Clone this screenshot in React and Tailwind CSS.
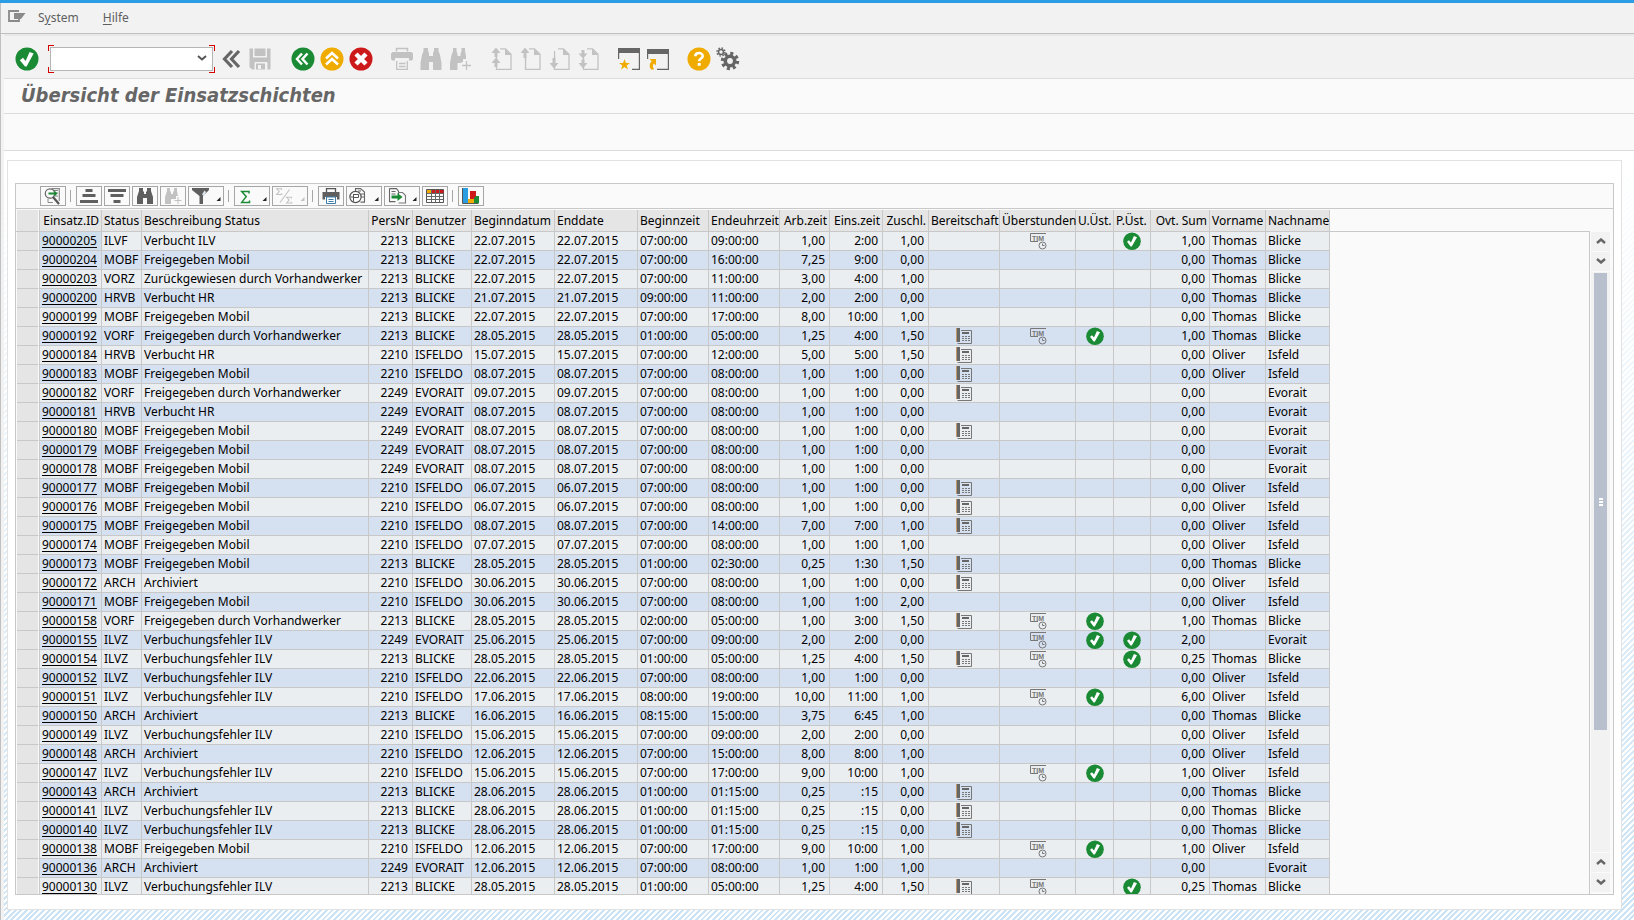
import React from "react";

const GREEN = "#1a8a34";
const AMBER = "#f0ab00";
const RED = "#cc1919";
const DARK = "#666666";
const LIGHT = "#c2c2c2";

/* ---------- main toolbar icons (24 x 24) ---------- */

function Svg({ w = 24, h = 24, children }) {
  return (
    <svg width={w} height={h} viewBox={`0 0 ${w} ${h}`} fill="none" className="block" aria-hidden="true">
      {children}
    </svg>
  );
}

const CheckIcon = () => (
  <Svg>
    <circle cx="12" cy="12" r="11.5" fill={GREEN} />
    <path d="M4.8 13.2 8 10.8l2.6 3.2L14.6 5l4 1.6L11.6 19.4H10z" fill="#fff" />
  </Svg>
);

const DoubleLeft = () => (
  <Svg>
    <path d="M13 4 5.5 12l7.5 8M20 4l-7.5 8 7.5 8" stroke={DARK} strokeWidth="3.2" />
  </Svg>
);

const SaveIcon = () => (
  <Svg>
    <path
      fillRule="evenodd"
      fill={LIGHT}
      d="M1.500 1.500h3.500V10.500h14V1.500h3.500v21h-3v-6.500a1 1 0 0 0-1-1h-11a1 1 0 0 0-1 1v6.500H4l-2.500-2.500zM6.500 1.500h11V9H6.500zM8 16.500h9v6H8zM10 18v4h3v-4z"
    />
  </Svg>
);

const BackIcon = () => (
  <Svg>
    <circle cx="12" cy="12" r="11.5" fill={GREEN} />
    <path d="M11 6.500 6 12l5 5.500M16.500 6.500l-5 5.500 5 5.500" stroke="#fff" strokeWidth="2.500" />
  </Svg>
);

const UpIcon = () => (
  <Svg>
    <circle cx="12" cy="12" r="11.5" fill={AMBER} />
    <path d="M6 11.500 12 6l6 5.500M6 17.500 12 12l6 5.500" stroke="#fff" strokeWidth="2.500" />
  </Svg>
);

const CancelIcon = () => (
  <Svg>
    <circle cx="12" cy="12" r="11.5" fill={RED} />
    <path d="m7 7 10 10M17 7 7 17" stroke="#fff" strokeWidth="4.500" />
  </Svg>
);

const PrintIcon = () => (
  <Svg>
    <path d="M6.500 4.500v-3h11v3" stroke={LIGHT} strokeWidth="1.500" />
    <path d="M1 6.500 2.500 5h19L23 6.500V12l-1 1.500h-3V11H5v2.500H2L1 12z" fill={LIGHT} />
    <path d="M6.700 14v8.300h10.600V14M9 16.500h6.500M9 19.500h6.500" stroke={LIGHT} strokeWidth="1.300" />
  </Svg>
);

const BINOCULARS =
  "M4.500 1H9v3l1 2v3h4V6l1-2V1h4.500v3L21 8l1.500 8v7H14v-8h-4v8H1.500v-7L3 8l1.500-4z";

const FindIcon = () => (
  <Svg>
    <path d={BINOCULARS} fill={LIGHT} />
  </Svg>
);

const FindNextIcon = () => (
  <Svg>
    <path d="M5 1h3.500v3l1 3v2h3V7l1-3V1H17v3l1 5v3h-3v3l-3 1h-2.500v7H2v-7l1.500-8L5 4z" fill={LIGHT} />
    <path d="M18.500 14v9M14 18.500h9" stroke={LIGHT} strokeWidth="1.300" />
  </Svg>
);

function PageIcon({ arrows }) {
  return (
    <Svg>
      <path d="M11 1.800h5.500l5.500 5.500V22.300H7.500V20M7.500 10v4" stroke={LIGHT} strokeWidth="1.300" />
      <path d="M16 1.500V8h6.300z" fill={LIGHT} />
      <path d={arrows} fill={LIGHT} />
    </Svg>
  );
}

const FirstPage = () => (
  <PageIcon arrows="M7 .500 11.500 6H8.500v4h-3V6h-3zM7 10.500l4.500 5.500H8.500v4h-3v-4h-3z" />
);
const PrevPage = () => <PageIcon arrows="M7 .500 11.500 6H8.500v5h-3V6h-3zM6.900 10h1.300v11H6.900z" />;
const NextPage = () => <PageIcon arrows="M5.500 11h3v5h3L7 21.500 2.500 16h3zM6.900 4h1.300v8H6.900z" />;
const LastPage = () => (
  <PageIcon arrows="M5.500 3h3v3.500h3L7 11.500 2.500 6.500h3zM5.500 12.500h3V16h3L7 21.500 2.500 16h3z" />
);

const NewSession = () => (
  <Svg>
    <path d="M1 1h22v5H1z" fill={DARK} />
    <path d="M1.600 5v7M22.400 5v17.400H15" stroke={DARK} strokeWidth="1.200" />
    <path d="m7.500 12 1.400 4h4.100l-3.300 2.500 1.300 4-3.500-2.400L4 22.500l1.300-4L2 16h4.100z" fill={AMBER} />
  </Svg>
);

const Shortcut = () => (
  <Svg>
    <path d="M1 2h22v5H1z" fill={DARK} />
    <path d="M1.600 6v6M22.400 6v16.400H11" stroke={DARK} strokeWidth="1.200" />
    <path d="M3.500 12H10v6.500l-2-2c-1 1-1.300 2.500-.800 4L8 22.500H5c-2-3-1.800-6 .700-8.300z" fill={AMBER} />
  </Svg>
);

const HelpIcon = () => (
  <Svg>
    <circle cx="12" cy="12" r="11.5" fill={AMBER} />
    <path d="M8.300 9.200C8.300 5 15.700 5 15.700 9c0 2.700-3.600 2.400-3.600 5.300" stroke="#fff" strokeWidth="2.600" />
    <path d="M10.700 16h3v2.800h-3z" fill="#fff" />
  </Svg>
);

const GearsIcon = () => (
  <Svg>
    <circle cx="14" cy="14" r="4.700" stroke={DARK} strokeWidth="3.600" />
    <circle cx="14" cy="14" r="7.500" stroke={DARK} strokeWidth="3.400" strokeDasharray="3 2.890" />
    <circle cx="5" cy="5" r="2.500" stroke={DARK} strokeWidth="1.500" />
    <circle cx="5" cy="5" r="4" stroke={DARK} strokeWidth="1.500" strokeDasharray="1.500 1.640" />
  </Svg>
);

/* ---------- grid toolbar icons (24 x 18) ---------- */

const DropMark = ({ color = "#222" }) => <path d="M31.500 10v4h-4z" fill={color} />;

const DetailsIcon = () => (
  <Svg h={18}>
    <path d="M10.500 1.600h7.800V14" stroke="#8a8a8a" strokeWidth="1.200" />
    <path d="M14 6h3M14 9h3M12 3.500h5" stroke="#8a8a8a" />
    <circle cx="9" cy="6.500" r="4.700" stroke={DARK} strokeWidth="1.200" />
    <path d="M7 12v3.500h5" stroke="#8a8a8a" />
    <path d="m12 10 6 7" stroke="#555" strokeWidth="2.200" />
    <path d="M7.500 5.500h6V3.500l3 3-3 3V7.500h-6z" fill={GREEN} />
  </Svg>
);
const SortAsc = () => (
  <Svg h={18}>
    <path d="M8.500 2h7v3h-7zM5.500 7h13v3h-13zM3 13h18v3H3z" fill="#5f5f5f" />
  </Svg>
);
const SortDesc = () => (
  <Svg h={18}>
    <path d="M3 2h18v3H3zM5.500 7h13v3h-13zM8.500 13h7v3h-7z" fill="#5f5f5f" />
  </Svg>
);
const GridFind = () => (
  <Svg h={18}>
    <path d="M6 1h4v3l1 1v2h2V5l1-1V1h4v3l2 6v7h-6v-6h-4v6H4v-7l2-6z" fill="#5f5f5f" />
  </Svg>
);
const GridFindNext = () => (
  <Svg h={18}>
    <path d="M6 1h3v3l1 1v2h2V5l1-1V1h3v3l1 5h-2v3h-5v5H4v-7l2-6z" fill={LIGHT} />
    <path d="M17 10v7M13.500 13.500h7" stroke={LIGHT} />
  </Svg>
);
const FilterIcon = () => (
  <Svg w={34} h={18}>
    <path d="M3 1h17v2l-6 6v8h-3.500V9L3 3z" fill="#5f5f5f" />
    <path d="M15.500 3.500 13 7.500l2 1.500 2-4z" fill="#dfeaf2" />
    <DropMark />
  </Svg>
);
const SumIcon = () => (
  <Svg w={34} h={18}>
    <path d="M14 6.500V4.600H6.700l4.500 5-4.500 5.800H14.500v-2" stroke={GREEN} strokeWidth="1.500" />
    <DropMark />
  </Svg>
);
const SubtotalIcon = () => (
  <Svg w={34} h={18}>
    <path d="M8.500 3V1.800H3.700l2.500 2.700-2.500 3H8.700V6.300M18.500 11.500v-1.200h-4.800l2.500 2.700-2.500 3h5v-1.200M16.500 2.500 7 15.500" stroke={LIGHT} strokeWidth="1.100" />
    <DropMark color={LIGHT} />
  </Svg>
);
const GridPrint = () => (
  <Svg h={18}>
    <path d="M7.500 5V1.700h9V5" stroke="#555" strokeWidth="1.300" />
    <path d="M3.500 5h17v7.500H18V10H6v2.500H3.500z" fill="#5f5f5f" />
    <path d="M7.500 10h9v6.500h-9z" fill="#fff" stroke="#3d7dad" />
    <path d="M9.500 12.500h5M9.500 14.500h5" stroke="#3d7dad" />
  </Svg>
);
const ViewsIcon = () => (
  <Svg w={34} h={18}>
    <path d="M8.500 5V1.600h5l4 3.500v10h-4" stroke="#666" strokeWidth="1.100" />
    <path d="M11 4h3M14 7h3M14 10h3" stroke="#666" />
    <circle cx="8.500" cy="10" r="5.600" fill="#fff" stroke="#555" strokeWidth="1.200" />
    <path d="M6.500 7.500h5v3h-5zM6.500 7v7.500M3.500 10h3" stroke="#555" />
    <DropMark />
  </Svg>
);
const ExportIcon = () => (
  <Svg w={34} h={18}>
    <path d="M4.500 1.600h7l2 2.500V7M4.500 1.600v13h6M6.500 4.500h4M6.500 7h4" stroke="#666" strokeWidth="1.100" />
    <path d="M13.500 5.500h4l3 3v7.500h-7" stroke="#777" strokeWidth="1.100" />
    <path d="M6.500 8.500h6V6l5 4-5 4v-2.500h-6z" fill={GREEN} />
    <DropMark />
  </Svg>
);
const LayoutIcon = () => (
  <Svg h={18}>
    <path d="M3.500 2.500h17v13h-17z" fill="#fff" stroke="#555" />
    <path d="M4 3h8.500v3.500H4z" fill={AMBER} />
    <path d="M8.500 3h12v3.500h-12z" fill={RED} />
    <path d="M3.500 6.500h17M3.500 9.500h17M3.500 12.500h17M8.500 2.500v13M12.500 2.500v13M16.500 2.500v13" stroke="#666" />
  </Svg>
);
const ChartIcon = () => (
  <Svg h={18}>
    <path d="M4 1h5v16H4z" fill="#2a9de0" />
    <path d="M11 4h6v8h-6z" fill={RED} />
    <path d="M9 12h6v5H9z" fill={AMBER} />
    <path d="m15 11 2-2h3v7l-1 1h-4z" fill={GREEN} />
    <path d="M3.500 1v15.500H19" stroke="#555" />
  </Svg>
);

/* ---------- cell icons ---------- */

const CellCheck = () => (
  <svg width="18" height="18" viewBox="0 0 18 18" className="mx-auto block" role="img" aria-label="Ja">
    <circle cx="9" cy="9.200" r="8.800" fill={GREEN} />
    <path d="m4 9.800 2-1.500 2 2.300L10.900 4l3.100 1.200L8.800 14.600H7.600z" fill="#fff" />
  </svg>
);
const CellPhone = () => (
  <svg width="18" height="18" viewBox="0 0 18 18" className="mx-auto block" role="img" aria-label="Bereitschaft">
    <path d="M1 1h1v14H1z" fill="#c49a6c" />
    <path d="M2 1h3v14H2z" fill="#666" />
    <path d="M6 3.500h10.500v13H2.500" fill="none" stroke="#777" />
    <path d="M7 5h7v2H7z" fill="#666" />
    <path d="M7 9.500h8M7 11.500h8M7 13.500h8" stroke="#777" strokeDasharray="2 1" />
  </svg>
);
const CellTime = () => (
  <svg width="18" height="18" viewBox="0 0 18 18" className="mx-auto block" role="img" aria-label="Überstunden">
    <path d="M17 1.500H1.500v8H9" fill="none" stroke="#777" />
    <text x="3" y="8.500" fontSize="7" fontWeight="700" fontFamily="Liberation Sans, sans-serif" fill="#777">
      TIM
    </text>
    <circle cx="13.500" cy="13.500" r="3.500" fill="none" stroke="#777" />
    <path d="M13.500 11.500v2h2" fill="none" stroke="#777" />
  </svg>
);

/* ---------- data ---------- */

const COLUMNS = [
  ["Einsatz.ID", "w-[62px]", "r"],
  ["Status", "w-[40px]", "l"],
  ["Beschreibung Status", "w-[227px]", "l"],
  ["PersNr", "w-[44px]", "r"],
  ["Benutzer", "w-[59px]", "l"],
  ["Beginndatum", "w-[83px]", "l"],
  ["Enddate", "w-[83px]", "l"],
  ["Beginnzeit", "w-[71px]", "l"],
  ["Endeuhrzeit", "w-[71px]", "l"],
  ["Arb.zeit", "w-[50px]", "r"],
  ["Eins.zeit", "w-[53px]", "r"],
  ["Zuschl.", "w-[46px]", "r"],
  ["Bereitschaft", "w-[71px]", "l"],
  ["Überstunden", "w-[76px]", "l"],
  ["U.Üst.", "w-[38px]", "l"],
  ["P.Üst.", "w-[37px]", "l"],
  ["Ovt. Sum", "w-[59px]", "r"],
  ["Vorname", "w-[56px]", "l"],
  ["Nachname", "w-[64px]", "l"],
];

const STATUS = {
  ILVF: "Verbucht ILV",
  MOBF: "Freigegeben Mobil",
  VORZ: "Zurückgewiesen durch Vorhandwerker",
  HRVB: "Verbucht HR",
  VORF: "Freigegeben durch Vorhandwerker",
  ARCH: "Archiviert",
  ILVZ: "Verbuchungsfehler ILV",
};

const PEOPLE = {
  B: ["2213", "BLICKE", "Thomas", "Blicke"],
  I: ["2210", "ISFELDO", "Oliver", "Isfeld"],
  E: ["2249", "EVORAIT", "", "Evorait"],
};

// id | status | person | date | start | end | work | shift | surcharge | flags (B, T, U, P) | overtime
const ROWS = `90000205|ILVF|B|22.07.2015|07:00:00|09:00:00|1,00|2:00|1,00|TP|1,00
90000204|MOBF|B|22.07.2015|07:00:00|16:00:00|7,25|9:00|0,00||0,00
90000203|VORZ|B|22.07.2015|07:00:00|11:00:00|3,00|4:00|1,00||0,00
90000200|HRVB|B|21.07.2015|09:00:00|11:00:00|2,00|2:00|0,00||0,00
90000199|MOBF|B|22.07.2015|07:00:00|17:00:00|8,00|10:00|1,00||0,00
90000192|VORF|B|28.05.2015|01:00:00|05:00:00|1,25|4:00|1,50|BTU|1,00
90000184|HRVB|I|15.07.2015|07:00:00|12:00:00|5,00|5:00|1,50|B|0,00
90000183|MOBF|I|08.07.2015|07:00:00|08:00:00|1,00|1:00|0,00|B|0,00
90000182|VORF|E|09.07.2015|07:00:00|08:00:00|1,00|1:00|0,00|B|0,00
90000181|HRVB|E|08.07.2015|07:00:00|08:00:00|1,00|1:00|0,00||0,00
90000180|MOBF|E|08.07.2015|07:00:00|08:00:00|1,00|1:00|0,00|B|0,00
90000179|MOBF|E|08.07.2015|07:00:00|08:00:00|1,00|1:00|0,00||0,00
90000178|MOBF|E|08.07.2015|07:00:00|08:00:00|1,00|1:00|0,00||0,00
90000177|MOBF|I|06.07.2015|07:00:00|08:00:00|1,00|1:00|0,00|B|0,00
90000176|MOBF|I|06.07.2015|07:00:00|08:00:00|1,00|1:00|0,00|B|0,00
90000175|MOBF|I|08.07.2015|07:00:00|14:00:00|7,00|7:00|1,00|B|0,00
90000174|MOBF|I|07.07.2015|07:00:00|08:00:00|1,00|1:00|1,00||0,00
90000173|MOBF|B|28.05.2015|01:00:00|02:30:00|0,25|1:30|1,50|B|0,00
90000172|ARCH|I|30.06.2015|07:00:00|08:00:00|1,00|1:00|0,00|B|0,00
90000171|MOBF|I|30.06.2015|07:00:00|08:00:00|1,00|1:00|2,00||0,00
90000158|VORF|B|28.05.2015|02:00:00|05:00:00|1,00|3:00|1,50|BTU|1,00
90000155|ILVZ|E|25.06.2015|07:00:00|09:00:00|2,00|2:00|0,00|TUP|2,00
90000154|ILVZ|B|28.05.2015|01:00:00|05:00:00|1,25|4:00|1,50|BTP|0,25
90000152|ILVZ|I|22.06.2015|07:00:00|08:00:00|1,00|1:00|0,00||0,00
90000151|ILVZ|I|17.06.2015|08:00:00|19:00:00|10,00|11:00|1,00|TU|6,00
90000150|ARCH|B|16.06.2015|08:15:00|15:00:00|3,75|6:45|1,00||0,00
90000149|ILVZ|I|15.06.2015|07:00:00|09:00:00|2,00|2:00|0,00||0,00
90000148|ARCH|I|12.06.2015|07:00:00|15:00:00|8,00|8:00|1,00||0,00
90000147|ILVZ|I|15.06.2015|07:00:00|17:00:00|9,00|10:00|1,00|TU|1,00
90000143|ARCH|B|28.06.2015|01:00:00|01:15:00|0,25|:15|0,00|B|0,00
90000141|ILVZ|B|28.06.2015|01:00:00|01:15:00|0,25|:15|0,00|B|0,00
90000140|ILVZ|B|28.06.2015|01:00:00|01:15:00|0,25|:15|0,00|B|0,00
90000138|MOBF|I|12.06.2015|07:00:00|17:00:00|9,00|10:00|1,00|TU|1,00
90000136|ARCH|E|12.06.2015|07:00:00|08:00:00|1,00|1:00|1,00||0,00
90000130|ILVZ|B|28.05.2015|01:00:00|05:00:00|1,25|4:00|1,50|BTP|0,25`
  .split("\n")
  .map((line) => line.split("|"));

/* ---------- building blocks ---------- */

function ToolGroup({ items }) {
  return (
    <div className="flex gap-[5px]">
      {items.map(([label, Icon]) => (
        <button key={label} type="button" aria-label={label} className="size-6">
          <Icon />
        </button>
      ))}
    </div>
  );
}

function GridButton({ label, icon: Icon }) {
  return (
    <button type="button" aria-label={label} className="h-5 border border-[#a6a6a6] bg-[#fafafa]">
      <Icon />
    </button>
  );
}

const Separator = () => <div className="mx-[2px] h-3 w-[2px] border-l border-[#a6a6a6]" />;

function ScrollButton({ label, up }) {
  return (
    <button type="button" aria-label={label} className="flex h-[19px] w-full shrink-0 items-center justify-center bg-[#f2f2f2]">
      <svg width="10" height="6" viewBox="0 0 10 6" fill="none" className="mb-px" aria-hidden="true">
        <path d={up ? "M1 5l4-3.500L9 5" : "M1 1l4 3.500L9 1"} stroke={DARK} strokeWidth="2.400" />
      </svg>
    </button>
  );
}

const Corner = ({ className }) => <span className={`pointer-events-none absolute size-[6px] border-[#d40000] ${className}`} />;

function Row({ row, index }) {
  const [id, status, who, date, start, end, work, shift, extra, flags, sum] = row;
  const [pers, user, first, last] = PEOPLE[who];
  const line = "h-[19px] border-r border-b border-[#c8c8c8] p-0";
  const left = `${line} pl-[2px] text-left`;
  const right = `${line} pr-[4px] text-right`;
  return (
    <tr className={index % 2 ? "bg-[#d5e0f1]" : "bg-[#eaeef1]"}>
      <td className="border-r border-b border-r-[#fafafa] border-b-[#c8c8c8] bg-[#e5e5e5] p-0" />
      <td className={`${line} border-l pl-[2px] text-left ${index === 0 ? "bg-[#cfe0ec]" : ""}`}>
        <a href={`#${id}`} className="underline underline-offset-2">{id}</a>
      </td>
      <td className={left}>{status}</td>
      <td className={left}>{STATUS[status]}</td>
      <td className={right}>{pers}</td>
      <td className={left}>{user}</td>
      <td className={left}>{date}</td>
      <td className={left}>{date}</td>
      <td className={left}>{start}</td>
      <td className={left}>{end}</td>
      <td className={right}>{work}</td>
      <td className={right}>{shift}</td>
      <td className={right}>{extra}</td>
      <td className={line}>{flags.includes("B") && <CellPhone />}</td>
      <td className={line}>{flags.includes("T") && <CellTime />}</td>
      <td className={line}>{flags.includes("U") && <CellCheck />}</td>
      <td className={line}>{flags.includes("P") && <CellCheck />}</td>
      <td className={right}>{sum}</td>
      <td className={left}>{first}</td>
      <td className={left}>{last}</td>
    </tr>
  );
}

function Grid() {
  return (
    <section className="flex min-h-0 flex-1 flex-col border border-[#c8c8c8] bg-[#fafafa]">
      <div className="flex h-[25px] shrink-0 items-center gap-[2px] border-b border-[#c8c8c8] pl-6">
        <GridButton label="Details" icon={DetailsIcon} />
        <Separator />
        <GridButton label="Aufsteigend sortieren" icon={SortAsc} />
        <GridButton label="Absteigend sortieren" icon={SortDesc} />
        <GridButton label="Suchen" icon={GridFind} />
        <GridButton label="Weitersuchen" icon={GridFindNext} />
        <GridButton label="Filter" icon={FilterIcon} />
        <Separator />
        <GridButton label="Summe" icon={SumIcon} />
        <GridButton label="Zwischensumme" icon={SubtotalIcon} />
        <Separator />
        <GridButton label="Drucken" icon={GridPrint} />
        <GridButton label="Sichten" icon={ViewsIcon} />
        <GridButton label="Exportieren" icon={ExportIcon} />
        <GridButton label="Layout" icon={LayoutIcon} />
        <Separator />
        <GridButton label="Grafik" icon={ChartIcon} />
      </div>
      <div className="flex min-h-0 flex-1 pt-px">
        <div className="relative min-w-0 flex-1 overflow-hidden pl-px">
          <div className="absolute inset-x-0 top-[21px] bottom-0 border-t border-r border-[#c8c8c8]" />
          <table className="relative w-[1313px] table-fixed border-separate border-spacing-0 text-[12px] leading-[18px] whitespace-nowrap text-black">
            <colgroup>
              <col className="w-[22px]" />
              {COLUMNS.map(([title, width], i) => (
                <col key={title} className={i === 0 ? "w-[63px]" : width} />
              ))}
            </colgroup>
            <thead>
              <tr className="bg-[#e5e5e5]">
                <td className="h-[22px] border-r border-b border-r-[#fafafa] border-b-[#c8c8c8] p-0" />
                {COLUMNS.map(([title, , align], i) => (
                  <th
                    key={title}
                    scope="col"
                    className={`border-r border-b border-[#c8c8c8] p-0 font-normal ${i === 0 ? "border-l" : ""} ${
                      align === "r" ? "pr-[2px] text-right" : "pl-[2px] text-left"
                    }`}
                  >
                    {title}
                  </th>
                ))}
              </tr>
            </thead>
            <tbody>
              {ROWS.map((row, i) => (
                <Row key={row[0]} row={row} index={i} />
              ))}
            </tbody>
          </table>
        </div>
        <div className="mr-[3px] ml-[1px] flex w-[19px] flex-col gap-px pt-[22px] pb-[2px]">
          <ScrollButton label="Nach oben" up />
          <ScrollButton label="Zeile nach unten" />
          <div className="flex min-h-0 flex-1 flex-col items-center bg-[#f2f2f2] pt-px">
            <div className="flex h-[79%] w-[13px] flex-col items-center justify-center gap-px bg-[#b8c0ce]">
              <span className="h-[2px] w-1 bg-white" />
              <span className="h-[2px] w-1 bg-white" />
              <span className="h-[2px] w-1 bg-white" />
            </div>
          </div>
          <ScrollButton label="Zeile nach oben" up />
          <ScrollButton label="Nach unten" />
        </div>
      </div>
    </section>
  );
}

export default function App() {
  return (
    <div className="flex h-screen flex-col overflow-hidden border-t-[3px] border-[#2b9de4] bg-[#f2f2f2] font-['Noto_Sans',sans-serif]">
      <div className="flex min-h-0 flex-1 flex-col border-l border-[#c0c0c0]">
        <nav className="flex h-[31px] shrink-0 items-center border-b border-[#c0c0c0] pl-[7px] text-[12px] text-[#5f5f5f]">
          <button type="button" aria-label="Menü" className="-mt-1">
            <svg width="18" height="12" viewBox="0 0 18 12" fill="none" className="block" aria-hidden="true">
              <path d="M11 1H1v10h10V9" stroke="#8a8a8a" strokeWidth="1.800" />
              <path d="M6 3h11.500L13 9H6z" fill="#8a8a8a" />
            </svg>
          </button>
          <button type="button" className="ml-3">S<u className="underline-offset-2">y</u>stem</button>
          <button type="button" className="ml-6"><u className="underline-offset-2">H</u>ilfe</button>
        </nav>

        <div className="flex min-h-0 flex-1 flex-col pl-[3px]">
          <div className="flex h-[45px] shrink-0 items-center border-t-2 border-b border-t-[#e8e8e8] border-b-[#dcdcdc] pt-[3px] pl-[11px]">
            <button type="button" aria-label="Weiter" className="size-6"><CheckIcon /></button>
            <div className="relative ml-[9px] p-[2px]">
              <Corner className="top-0 left-0 border-t border-l" />
              <Corner className="top-0 right-0 border-t border-r" />
              <Corner className="bottom-0 left-0 border-b border-l" />
              <Corner className="right-0 bottom-0 border-r border-b" />
              <input
                type="text"
                aria-label="Befehlsfeld"
                className="block h-6 w-[163px] border border-[#b5b5b5] bg-white px-1 text-[12px] outline-none"
              />
              <svg width="10" height="6" viewBox="0 0 10 6" fill="none" className="pointer-events-none absolute top-[10px] right-2" aria-hidden="true">
                <path d="M1 1l4 3.500L9 1" stroke="#555" strokeWidth="2" />
              </svg>
            </div>
            <div className="mr-[19px] ml-1">
              <ToolGroup items={[["Ausblenden", DoubleLeft], ["Sichern", SaveIcon]]} />
            </div>
            <div className="flex gap-[17px]">
              <ToolGroup items={[["Zurück", BackIcon], ["Beenden", UpIcon], ["Abbrechen", CancelIcon]]} />
              <ToolGroup items={[["Drucken", PrintIcon], ["Suchen", FindIcon], ["Weitersuchen", FindNextIcon]]} />
              <ToolGroup
                items={[["Erste Seite", FirstPage], ["Vorige Seite", PrevPage], ["Nächste Seite", NextPage], ["Letzte Seite", LastPage]]}
              />
              <ToolGroup items={[["Neuer Modus", NewSession], ["Verknüpfung", Shortcut]]} />
              <ToolGroup items={[["Hilfe", HelpIcon], ["Einstellungen", GearsIcon]]} />
            </div>
          </div>

          <header className="flex h-[35px] shrink-0 items-center border-b border-[#dcdcdc] bg-[#fafafa] pl-[17px]">
            <h1 className="-mt-[2px] font-['DejaVu_Sans_Condensed','DejaVu_Sans',sans-serif] text-[20px] leading-6 font-bold text-[#666] italic">
              Übersicht der Einsatzschichten
            </h1>
          </header>
          <div className="h-[37px] shrink-0 border-b border-[#dcdcdc] bg-[#fafafa]" />

          <main className="flex min-h-0 flex-1 flex-col bg-[linear-gradient(to_bottom,#ffffff,#ffffff00),repeating-linear-gradient(135deg,#cbe3f4_0px,#cbe3f4_2px,#ffffff_2px,#ffffff_4px)] pt-[9px] pr-3 pb-[10px] pl-[3px]">
            <div className="flex min-h-0 flex-1 flex-col border border-[#e2e2e2] bg-white px-[7px] pt-[22px] pb-[14px]">
              <Grid />
            </div>
          </main>
        </div>
      </div>
    </div>
  );
}
